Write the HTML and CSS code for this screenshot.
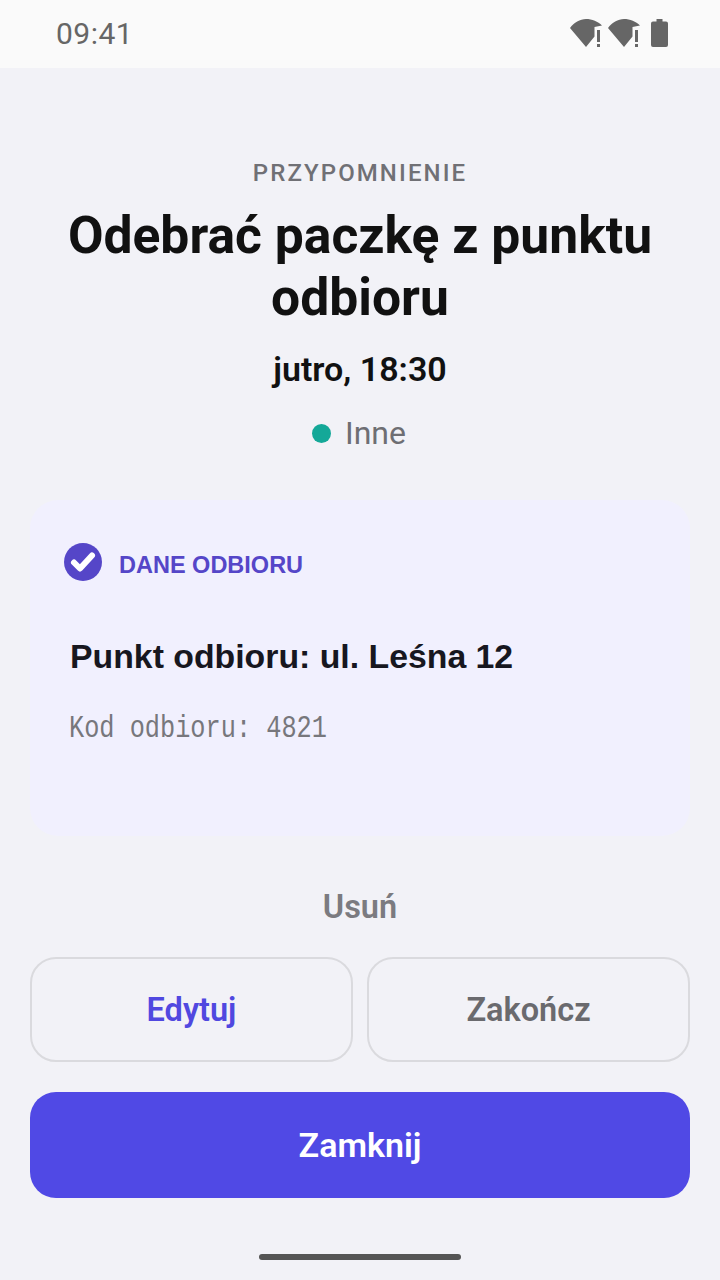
FILE: index.html
```html
<!DOCTYPE html>
<html lang="pl">
<head>
  <meta charset="UTF-8">
  <meta name="viewport" content="width=device-width, initial-scale=1.0">
  <title>Przypomnienie</title>
  <link rel="stylesheet" href="styles.css">
</head>
<body>
  <div class="status">
    <span class="time">09:41</span>
    <div class="status-icons">
      <svg class="wifi" viewBox="0 0 34 28"><path d="M0 9C4 3.500 10 0 16 0C22 0 28 2.500 32 6.500L24.500 8V17.500L16 28Z"/><rect x="27" y="11" width="3" height="12"/><rect x="27" y="25" width="3" height="3"/></svg>
      <svg class="wifi" viewBox="0 0 34 28"><path d="M0 9C4 3.500 10 0 16 0C22 0 28 2.500 32 6.500L24.500 8V17.500L16 28Z"/><rect x="27" y="11" width="3" height="12"/><rect x="27" y="25" width="3" height="3"/></svg>
      <svg class="battery" viewBox="0 0 17 28"><path d="M5.500 0H11.500V2.500H15Q17 2.500 17 4.500V26Q17 28 15 28H2Q0 28 0 26V4.500Q0 2.500 2 2.500H5.500Z"/></svg>
    </div>
  </div>

  <div class="page">
    <div class="head">
      <div class="eyebrow">PRZYPOMNIENIE</div>
      <h1>Odebrać paczkę z punktu odbioru</h1>
      <div class="when">jutro, 18:30</div>
      <div class="category"><span class="dot"></span>Inne</div>
    </div>

    <div class="card">
      <div class="card-title">
        <svg class="check" viewBox="0 0 38 38"><circle cx="19" cy="19" r="19"/><path d="M10 19.500L16 25.500L28 12.500"/></svg>
        <span>DANE ODBIORU</span>
      </div>
      <div class="place">Punkt odbioru: ul. Leśna 12</div>
      <div class="code">Kod odbioru: 4821</div>
    </div>

    <div class="delete">Usuń</div>
    <div class="row">
      <div class="btn edit">Edytuj</div>
      <div class="btn finish">Zakończ</div>
    </div>
    <div class="close">Zamknij</div>
  </div>

  <div class="nav"><span class="handle"></span></div>
</body>
</html>
```

FILE: styles.css
```css
html, body {
  margin: 0;
  padding: 0;
}

body {
  width: 720px;
  height: 1280px;
  overflow: hidden;
  display: flex;
  flex-direction: column;
  background-color: #f2f2f7;
  font-family: Roboto, sans-serif;
}

.status {
  height: 68px;
  flex: none;
  box-sizing: border-box;
  display: flex;
  align-items: center;
  justify-content: space-between;
  padding: 0 52px 2px 56px;
  background-color: #fafafa;
  color: #666;
}

.time {
  font-size: 30px;
  letter-spacing: 0.500px;
}

.status-icons {
  display: flex;
  align-items: center;
  gap: 4px;
}

.status-icons svg {
  fill: #666;
  display: block;
}

.wifi {
  width: 34px;
  height: 28px;
}

.battery {
  width: 17px;
  height: 28px;
  margin-left: 5px;
}

.page {
  display: flex;
  flex-direction: column;
  padding: 0 30px;
}

.head {
  padding-top: 91px;
  text-align: center;
}

.eyebrow {
  font-size: 24px;
  line-height: 28px;
  font-weight: 500;
  letter-spacing: 2.100px;
  color: #707075;
}

h1 {
  margin: 18px 0 0;
  font-size: 51.600px;
  line-height: 62px;
  font-weight: 700;
  color: #111;
}

.when {
  margin-top: 19px;
  font-size: 34px;
  line-height: 42px;
  font-weight: 600;
  color: #111;
}

.category {
  margin-top: 22px;
  padding-right: 2px;
  display: flex;
  align-items: center;
  justify-content: center;
  gap: 14px;
  font-size: 32px;
  line-height: 42px;
  color: #6e6e73;
}

.dot {
  width: 19px;
  height: 19px;
  border-radius: 50%;
  background-color: #14a898;
}

.card {
  margin-top: 46px;
  height: 336px;
  box-sizing: border-box;
  padding: 43px 34px 0;
  border-radius: 28px;
  background-color: #f1f0fe;
}

.card-title {
  display: flex;
  align-items: center;
  gap: 17px;
  font-family: "Liberation Sans", sans-serif;
  font-size: 23.500px;
  font-weight: 700;
  color: #5546c8;
}

.card-title span {
  padding-top: 6px;
}

.check {
  width: 38px;
  height: 38px;
  flex: none;
}

.check circle {
  fill: #5546c8;
}

.check path {
  fill: none;
  stroke: #fff;
  stroke-width: 6px;
  stroke-linecap: round;
  stroke-linejoin: round;
}

.place {
  margin: 54px 0 0 6px;
  font-family: "Liberation Sans", sans-serif;
  font-size: 33.800px;
  line-height: 42px;
  font-weight: 700;
  color: #17171f;
}

/* the code line is a tall, narrow typewriter face */
.code {
  margin: 34px 0 0 5px;
  font-family: "Liberation Mono", monospace;
  font-size: 32px;
  line-height: 36px;
  white-space: nowrap;
  color: #77777c;
  transform: scaleX(0.79);
  transform-origin: left center;
}

.delete {
  margin-top: 52px;
  text-align: center;
  font-size: 32.500px;
  line-height: 38px;
  font-weight: 600;
  color: #7b7b80;
}

.row {
  margin-top: 31px;
  display: flex;
  gap: 14px;
}

.btn {
  flex: 1;
  height: 105px;
  box-sizing: border-box;
  display: flex;
  align-items: center;
  justify-content: center;
  border: 2px solid #dadade;
  border-radius: 26px;
  font-size: 32.500px;
  font-weight: 600;
}

.edit {
  color: #5048e0;
}

.finish {
  color: #6a6a6e;
}

.close {
  margin-top: 30px;
  height: 106px;
  display: flex;
  align-items: center;
  justify-content: center;
  border-radius: 26px;
  background-color: #5049e5;
  color: #fff;
  font-size: 34px;
  font-weight: 600;
}

.nav {
  display: flex;
  justify-content: center;
  padding-top: 56px;
}

.handle {
  width: 202px;
  height: 6px;
  border-radius: 3px;
  background-color: #555;
}
```
